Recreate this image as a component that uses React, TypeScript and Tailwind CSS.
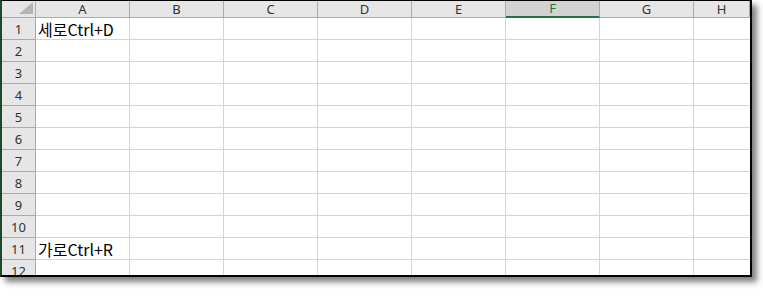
const COLS = ["A", "B", "C", "D", "E", "F", "G", "H"];
const ROWS = Array.from({ length: 12 }, (_, i) => i + 1);

const cellText: Record<number, string> = {
  1: "세로Ctrl+D",
  11: "가로Ctrl+R",
};

function CornerCell() {
  return (
    <div className="relative h-[17px] border-r border-b border-[#ababab] bg-[#e6e6e6]">
      <svg className="absolute right-[2px] bottom-[3px]" width="14" height="12" viewBox="0 0 14 12">
        <polygon points="14,0 14,12 0,12" fill="#b4b4b4" />
      </svg>
    </div>
  );
}

function ColHeader({ label }: { label: string }) {
  const selected = label === "F";
  return (
    <div
      className={
        selected
          ? "flex h-[17px] items-center justify-center border-r border-b-2 border-r-[#ababab] border-b-[#217346] bg-[#d2d2d2] text-[13px] leading-none text-[#217346]"
          : "flex h-[17px] items-center justify-center border-r border-b border-[#ababab] bg-[#e6e6e6] text-[13px] leading-none text-[#333]"
      }
    >
      {label}
    </div>
  );
}

export default function App() {
  return (
    <div className="h-[303px] w-[763px] bg-white font-['Noto_Sans','Noto_Sans_CJK_KR',sans-serif]">
      <div className="h-[277px] w-[752px] overflow-hidden border-t border-r-2 border-b-2 border-l-2 border-t-black border-r-black border-b-black border-l-[#1d4a2c] bg-white shadow-[5px_5px_6px_rgba(0,0,0,0.5)]">
        <div className="grid grid-cols-[34px_repeat(7,94px)_1fr]">
          <CornerCell />
          {COLS.map((c) => (
            <ColHeader key={c} label={c} />
          ))}
          {ROWS.map((r) => (
            <div key={r} className="contents">
              <div className="flex h-[22px] items-center justify-center border-r border-b border-[#ababab] bg-[#e6e6e6] pt-[2px] text-[13px] leading-none text-[#333]">
                {r}
              </div>
              {COLS.map((c) => (
                <div
                  key={c}
                  className={
                    c === "H"
                      ? "h-[22px] border-b border-[#d4d4d4]"
                      : "flex h-[22px] items-center border-r border-b border-[#d4d4d4] pl-[2px] whitespace-nowrap"
                  }
                >
                  {c === "A" && cellText[r] ? (
                    <span className="font-['Noto_Sans_CJK_KR',sans-serif] text-[16px] leading-none text-black">
                      {cellText[r]}
                    </span>
                  ) : null}
                </div>
              ))}
            </div>
          ))}
        </div>
      </div>
    </div>
  );
}
